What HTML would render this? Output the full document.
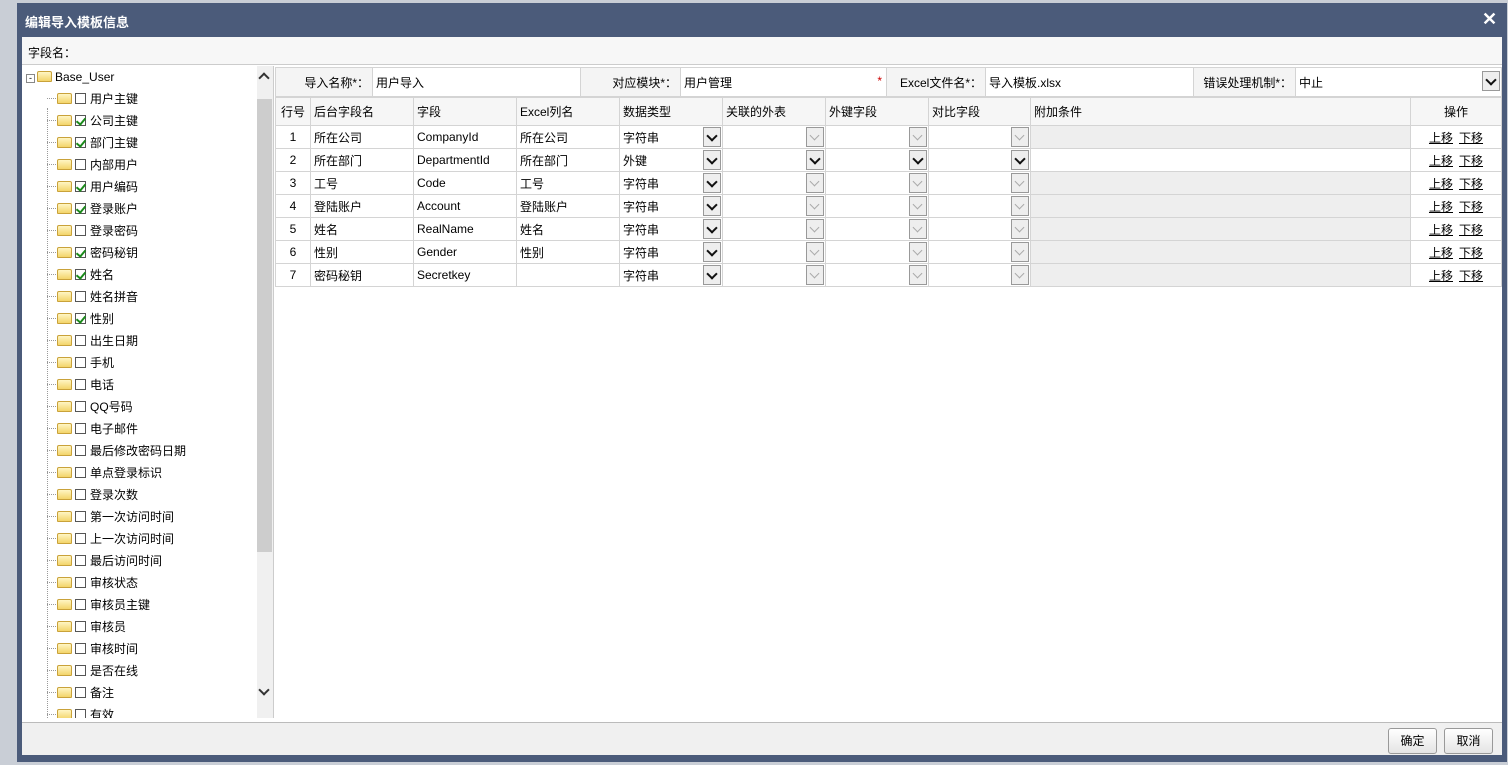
<!DOCTYPE html>
<html><head><meta charset="utf-8"><style>
*{box-sizing:border-box;margin:0;padding:0}
body{width:1508px;height:765px;overflow:hidden;background:#c9ced6;font-family:"Liberation Sans","Noto Sans CJK SC",sans-serif;font-size:12px;color:#000;position:relative}
.frame{position:absolute;left:17px;top:3px;width:1490px;height:759px;background:#4b5b7a}
.title{position:absolute;left:25px;top:12px;color:#fff;font-weight:bold;font-size:13px}
.close{position:absolute;left:1482px;top:9px;color:#fff;font-size:18px;font-weight:bold}
.content{position:absolute;left:22px;top:37px;width:1480px;height:718px;background:#fff}
.fname{position:absolute;left:0;top:0;width:1480px;height:28px;background:#f7f7f7;border-bottom:1px solid #ccc;padding:7px 6px;font-size:12px}
.tree{position:absolute;left:0;top:29px;width:250px;height:652px;background:#fff;overflow:hidden}
.sb{position:absolute;left:235px;top:29px;width:16px;height:652px;background:#f0f0f0}
.thumb{position:absolute;left:0;top:33px;width:15px;height:453px;background:#cdcdcd}
.it{position:absolute;height:18px;line-height:18px;font-size:12px;white-space:nowrap}
.fold{display:inline-block;width:15px;height:11px;background:linear-gradient(#fff6c4,#f3d46a);border:1px solid #c9a23a;border-radius:2px 2px 1px 1px;vertical-align:-1px;margin-right:3px}
.cb{display:inline-block;width:11px;height:11px;border:1px solid #555;background:#fff;vertical-align:-1px;margin-right:4px;position:relative}
.cb.on::after{content:"";position:absolute;left:2px;top:0px;width:4px;height:7px;border:solid #1a8a1a;border-width:0 2px 2px 0;transform:rotate(40deg)}
.vl{position:absolute;left:25px;top:42px;width:0;height:610px;border-left:1px dotted #999}
.hl{display:inline-block;width:9px;border-top:1px dotted #999;vertical-align:4px;margin-right:1px}
.grid{position:absolute;left:253px;top:30px}
table{border-collapse:collapse;table-layout:fixed}
td{border:1px solid #d4d4d4;height:23px;padding:0 3px;font-size:12px;white-space:nowrap;overflow:hidden;position:relative}
.form td{height:29px;background:#fff}
.form td.l{background:#f4f4f4;text-align:right}
.hd td{height:28px;background:#f6f6f6}
.g{background:#eeeeee}
.sel{position:absolute;right:1px;top:1px;width:18px;height:20px;border:1px solid #999;background:#eee}
.sel::after{content:"";position:absolute;left:4px;top:4px;width:6px;height:6px;border:solid #111;border-width:0 2px 2px 0;transform:rotate(45deg)}
.sel.d::after{border-color:#aaa;border-width:0 1px 1px 0}
a{color:#000;text-decoration:underline;margin:0 3px}
.foot{position:absolute;left:0;top:685px;width:1480px;height:33px;background:#f0f0f0;border-top:1px solid #bbb}
.btn{position:absolute;top:5px;width:49px;height:26px;border:1px solid #999;border-radius:3px;background:linear-gradient(#fff,#e4e4e4);text-align:center;line-height:24px;font-size:12px}
</style></head><body>
<div class="frame"></div>
<div class="title">编辑导入模板信息</div>
<div class="close">✕</div>
<div class="content">
<div class="fname">字段名：</div>
<div class="tree">
<div class="vl"></div>
<div class="it" style="left:4px;top:2px"><span style="display:inline-block;width:9px;height:9px;border:1px solid #888;font-size:9px;line-height:7px;text-align:center;vertical-align:0;margin-right:2px">-</span><span class="fold"></span>Base_User</div>
<div class="it" style="left:25px;top:24px"><span class="hl"></span><span class="fold"></span><span class="cb"></span>用户主键</div>
<div class="it" style="left:25px;top:46px"><span class="hl"></span><span class="fold"></span><span class="cb on"></span>公司主键</div>
<div class="it" style="left:25px;top:68px"><span class="hl"></span><span class="fold"></span><span class="cb on"></span>部门主键</div>
<div class="it" style="left:25px;top:90px"><span class="hl"></span><span class="fold"></span><span class="cb"></span>内部用户</div>
<div class="it" style="left:25px;top:112px"><span class="hl"></span><span class="fold"></span><span class="cb on"></span>用户编码</div>
<div class="it" style="left:25px;top:134px"><span class="hl"></span><span class="fold"></span><span class="cb on"></span>登录账户</div>
<div class="it" style="left:25px;top:156px"><span class="hl"></span><span class="fold"></span><span class="cb"></span>登录密码</div>
<div class="it" style="left:25px;top:178px"><span class="hl"></span><span class="fold"></span><span class="cb on"></span>密码秘钥</div>
<div class="it" style="left:25px;top:200px"><span class="hl"></span><span class="fold"></span><span class="cb on"></span>姓名</div>
<div class="it" style="left:25px;top:222px"><span class="hl"></span><span class="fold"></span><span class="cb"></span>姓名拼音</div>
<div class="it" style="left:25px;top:244px"><span class="hl"></span><span class="fold"></span><span class="cb on"></span>性别</div>
<div class="it" style="left:25px;top:266px"><span class="hl"></span><span class="fold"></span><span class="cb"></span>出生日期</div>
<div class="it" style="left:25px;top:288px"><span class="hl"></span><span class="fold"></span><span class="cb"></span>手机</div>
<div class="it" style="left:25px;top:310px"><span class="hl"></span><span class="fold"></span><span class="cb"></span>电话</div>
<div class="it" style="left:25px;top:332px"><span class="hl"></span><span class="fold"></span><span class="cb"></span>QQ号码</div>
<div class="it" style="left:25px;top:354px"><span class="hl"></span><span class="fold"></span><span class="cb"></span>电子邮件</div>
<div class="it" style="left:25px;top:376px"><span class="hl"></span><span class="fold"></span><span class="cb"></span>最后修改密码日期</div>
<div class="it" style="left:25px;top:398px"><span class="hl"></span><span class="fold"></span><span class="cb"></span>单点登录标识</div>
<div class="it" style="left:25px;top:420px"><span class="hl"></span><span class="fold"></span><span class="cb"></span>登录次数</div>
<div class="it" style="left:25px;top:442px"><span class="hl"></span><span class="fold"></span><span class="cb"></span>第一次访问时间</div>
<div class="it" style="left:25px;top:464px"><span class="hl"></span><span class="fold"></span><span class="cb"></span>上一次访问时间</div>
<div class="it" style="left:25px;top:486px"><span class="hl"></span><span class="fold"></span><span class="cb"></span>最后访问时间</div>
<div class="it" style="left:25px;top:508px"><span class="hl"></span><span class="fold"></span><span class="cb"></span>审核状态</div>
<div class="it" style="left:25px;top:530px"><span class="hl"></span><span class="fold"></span><span class="cb"></span>审核员主键</div>
<div class="it" style="left:25px;top:552px"><span class="hl"></span><span class="fold"></span><span class="cb"></span>审核员</div>
<div class="it" style="left:25px;top:574px"><span class="hl"></span><span class="fold"></span><span class="cb"></span>审核时间</div>
<div class="it" style="left:25px;top:596px"><span class="hl"></span><span class="fold"></span><span class="cb"></span>是否在线</div>
<div class="it" style="left:25px;top:618px"><span class="hl"></span><span class="fold"></span><span class="cb"></span>备注</div>
<div class="it" style="left:25px;top:640px"><span class="hl"></span><span class="fold"></span><span class="cb"></span>有效</div>
</div>
<div class="sb"><div style="position:absolute;left:3px;top:8px;width:8px;height:8px;border:solid #333;border-width:2px 0 0 2px;transform:rotate(45deg)"></div><div class="thumb"></div><div style="position:absolute;left:3px;top:620px;width:8px;height:8px;border:solid #333;border-width:0 2px 2px 0;transform:rotate(45deg)"></div></div>
<div style="position:absolute;left:251px;top:29px;width:1px;height:652px;background:#ccc"></div>
<div class="grid">
<table class="form" style="width:1226px">
<colgroup><col style="width:97px"><col style="width:208px"><col style="width:100px"><col style="width:206px"><col style="width:99px"><col style="width:208px"><col style="width:102px"><col style="width:206px"></colgroup>
<tr><td class="l">导入名称*：</td><td>用户导入</td><td class="l">对应模块*：</td><td>用户管理<span style="position:absolute;right:4px;color:#c00">*</span></td><td class="l">Excel文件名*：</td><td>导入模板.xlsx</td><td class="l">错误处理机制*：</td><td>中止<span class="sel" style="top:3px"></span></td></tr>
</table>
<table style="width:1226px">
<colgroup><col style="width:35px"><col style="width:103px"><col style="width:103px"><col style="width:103px"><col style="width:103px"><col style="width:103px"><col style="width:103px"><col style="width:102px"><col style="width:380px"><col style="width:91px"></colgroup>
<tr class="hd"><td style="text-align:center">行号</td><td>后台字段名</td><td>字段</td><td>Excel列名</td><td>数据类型</td><td>关联的外表</td><td>外键字段</td><td>对比字段</td><td>附加条件</td><td style="text-align:center">操作</td></tr>
<tr><td style="text-align:center">1</td><td>所在公司</td><td>CompanyId</td><td>所在公司</td><td>字符串<span class="sel"></span></td><td><span class="sel d"></span></td><td><span class="sel d"></span></td><td><span class="sel d"></span></td><td class="g"></td><td style="text-align:center"><a>上移</a><a>下移</a></td></tr>
<tr><td style="text-align:center">2</td><td>所在部门</td><td>DepartmentId</td><td>所在部门</td><td>外键<span class="sel"></span></td><td><span class="sel"></span></td><td><span class="sel"></span></td><td><span class="sel"></span></td><td></td><td style="text-align:center"><a>上移</a><a>下移</a></td></tr>
<tr><td style="text-align:center">3</td><td>工号</td><td>Code</td><td>工号</td><td>字符串<span class="sel"></span></td><td><span class="sel d"></span></td><td><span class="sel d"></span></td><td><span class="sel d"></span></td><td class="g"></td><td style="text-align:center"><a>上移</a><a>下移</a></td></tr>
<tr><td style="text-align:center">4</td><td>登陆账户</td><td>Account</td><td>登陆账户</td><td>字符串<span class="sel"></span></td><td><span class="sel d"></span></td><td><span class="sel d"></span></td><td><span class="sel d"></span></td><td class="g"></td><td style="text-align:center"><a>上移</a><a>下移</a></td></tr>
<tr><td style="text-align:center">5</td><td>姓名</td><td>RealName</td><td>姓名</td><td>字符串<span class="sel"></span></td><td><span class="sel d"></span></td><td><span class="sel d"></span></td><td><span class="sel d"></span></td><td class="g"></td><td style="text-align:center"><a>上移</a><a>下移</a></td></tr>
<tr><td style="text-align:center">6</td><td>性别</td><td>Gender</td><td>性别</td><td>字符串<span class="sel"></span></td><td><span class="sel d"></span></td><td><span class="sel d"></span></td><td><span class="sel d"></span></td><td class="g"></td><td style="text-align:center"><a>上移</a><a>下移</a></td></tr>
<tr><td style="text-align:center">7</td><td>密码秘钥</td><td>Secretkey</td><td></td><td>字符串<span class="sel"></span></td><td><span class="sel d"></span></td><td><span class="sel d"></span></td><td><span class="sel d"></span></td><td class="g"></td><td style="text-align:center"><a>上移</a><a>下移</a></td></tr>
</table>
</div>
<div class="foot"><div class="btn" style="left:1366px">确定</div><div class="btn" style="left:1422px">取消</div></div>
</div>
</body></html>
